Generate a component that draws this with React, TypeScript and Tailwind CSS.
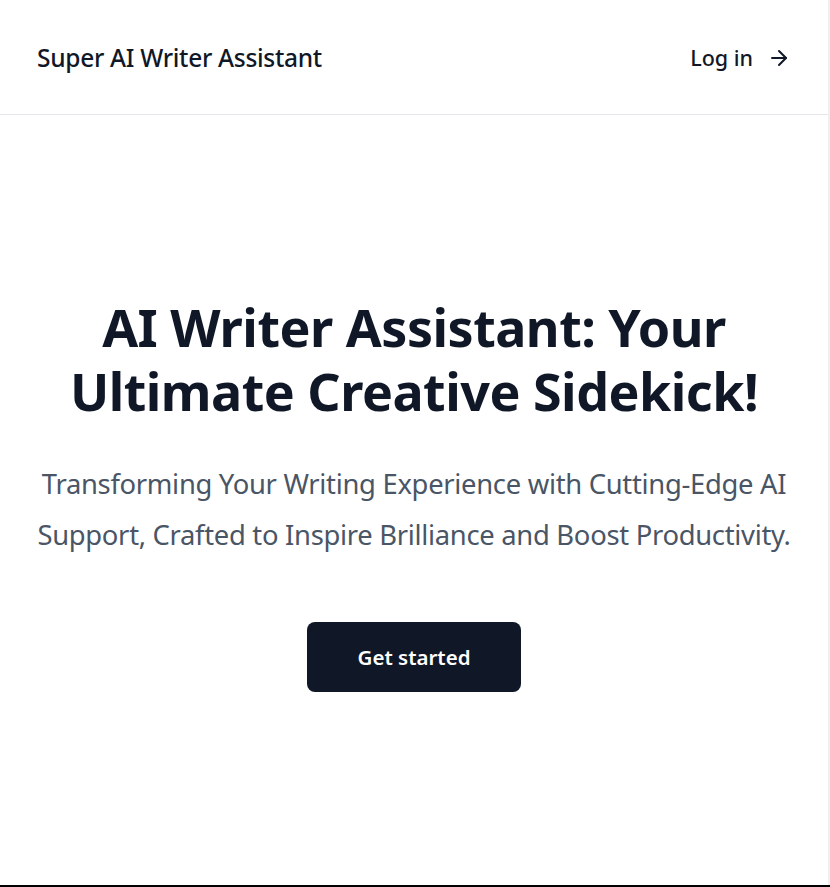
import { ArrowRight } from 'lucide-react'

export default function App() {
  return (
    <div
      className="flex h-[887px] w-full border-b-2 border-black bg-white text-gray-900"
      style={{ fontFamily: '"Noto Sans", "Open Sans", sans-serif' }}
    >
      <div className="flex flex-1 flex-col">
        <header className="flex h-[115px] items-center justify-between border-b border-gray-200 px-[37px]">
          <span className="mt-[2px] text-[24.5px] font-medium tracking-[-0.3px]">Super AI Writer Assistant</span>
          <a href="#" className="mt-[2px] flex items-center gap-[14px] text-[21.5px] font-medium">
            Log in
            <ArrowRight className="h-6 w-6" strokeWidth={2} />
          </a>
        </header>

        <main className="flex flex-1 flex-col items-center px-8 pt-[180px] text-center">
          <h1 className="text-[52px] font-bold leading-[64px] tracking-[-0.5px]">
            AI Writer Assistant: Your
            <br />
            Ultimate Creative Sidekick!
          </h1>
          <p className="mt-[35px] text-[27.4px] leading-[51px] tracking-[-0.3px] text-gray-600">
            Transforming Your Writing Experience with Cutting-Edge AI Support, Crafted to Inspire Brilliance and Boost Productivity.
          </p>
          <button className="mt-[62px] h-[70px] w-[214px] rounded-lg bg-gray-900 text-[20.5px] font-semibold text-white">
            Get started
          </button>
        </main>
      </div>
      <div className="w-[2px] bg-[#efefef]" />
    </div>
  )
}
